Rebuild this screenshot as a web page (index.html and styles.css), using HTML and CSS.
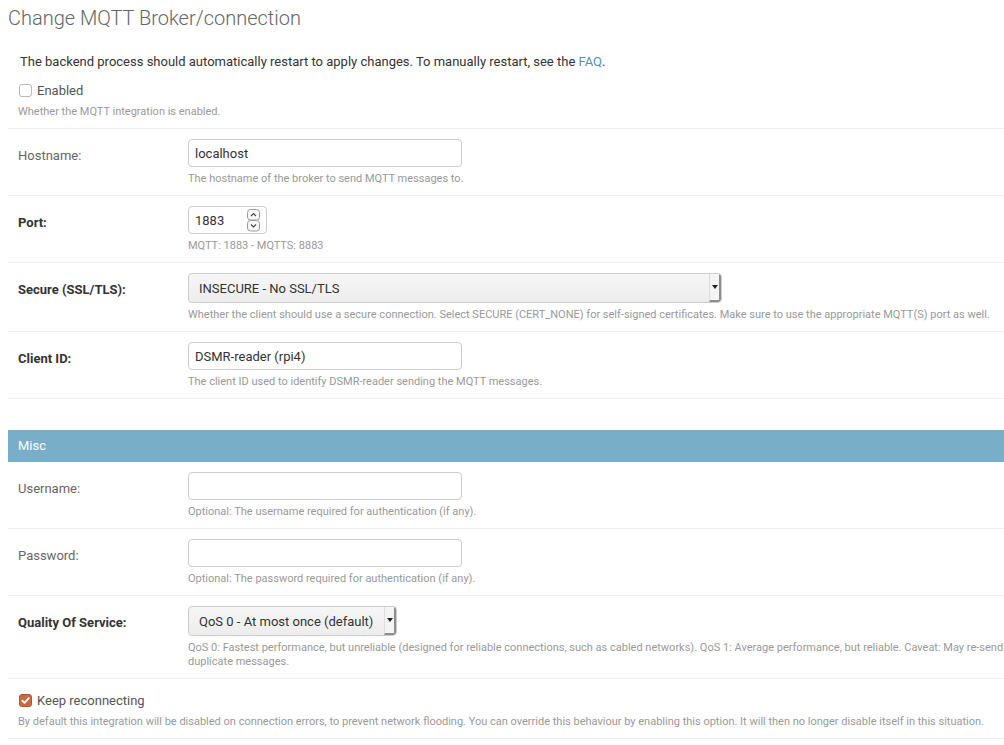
FILE: index.html
```html
<!DOCTYPE html>
<html lang="en">
<head>
<meta charset="utf-8">
<title>Change MQTT Broker/connection</title>
<link rel="stylesheet" href="styles.css">
</head>
<body>
<div class="page">
  <h1>Change MQTT Broker/connection</h1>
  <p class="notice">The backend process should automatically restart to apply changes. To manually restart, see the <a href="#">FAQ</a>.</p>
  <form>
    <fieldset class="module">
      <div class="row check-row">
        <div class="check-line"><span class="cb"></span><label class="cb-label">Enabled</label></div>
        <p class="help">Whether the MQTT integration is enabled.</p>
      </div>
      <div class="row field-row">
        <label class="label">Hostname:</label>
        <div class="field">
          <input class="text" type="text" value="localhost">
          <p class="help">The hostname of the broker to send MQTT messages to.</p>
        </div>
      </div>
      <div class="row field-row">
        <label class="label req">Port:</label>
        <div class="field">
          <div class="num">
            <input class="num-input" type="text" value="1883">
            <svg class="spin" width="13" height="23" viewBox="0 0 13 23">
              <rect x="0.5" y="0.5" width="12" height="10.5" rx="3" fill="#f7f7f7" stroke="#9a9a9a"/>
              <rect x="0.5" y="11.5" width="12" height="10.5" rx="3" fill="#f7f7f7" stroke="#9a9a9a"/>
              <path d="M4 7 L6.5 4.5 L9 7" fill="none" stroke="#444" stroke-width="1.1"/>
              <path d="M4 15.5 L6.5 18 L9 15.5" fill="none" stroke="#444" stroke-width="1.1"/>
            </svg>
          </div>
          <p class="help">MQTT: 1883 - MQTTS: 8883</p>
        </div>
      </div>
      <div class="row field-row">
        <label class="label req">Secure (SSL/TLS):</label>
        <div class="field">
          <div class="select wide">
            <select><option>INSECURE - No SSL/TLS</option></select>
            <span class="arrow"></span>
          </div>
          <p class="help">Whether the client should use a secure connection. Select SECURE (CERT_NONE) for self-signed certificates. Make sure to use the appropriate MQTT(S) port as well.</p>
        </div>
      </div>
      <div class="row field-row">
        <label class="label req">Client ID:</label>
        <div class="field">
          <input class="text" type="text" value="DSMR-reader (rpi4)">
          <p class="help">The client ID used to identify DSMR-reader sending the MQTT messages.</p>
        </div>
      </div>
    </fieldset>

    <fieldset class="module misc">
      <h2>Misc</h2>
      <div class="row field-row">
        <label class="label">Username:</label>
        <div class="field">
          <input class="text" type="text" value="">
          <p class="help">Optional: The username required for authentication (if any).</p>
        </div>
      </div>
      <div class="row field-row">
        <label class="label">Password:</label>
        <div class="field">
          <input class="text" type="password" value="">
          <p class="help">Optional: The password required for authentication (if any).</p>
        </div>
      </div>
      <div class="row field-row">
        <label class="label req">Quality Of Service:</label>
        <div class="field">
          <div class="select qos">
            <select><option>QoS 0 - At most once (default)</option></select>
            <span class="arrow"></span>
          </div>
          <p class="help">QoS 0: Fastest performance, but unreliable (designed for reliable connections, such as cabled networks). QoS 1: Average performance, but reliable. Caveat: May re-send duplicate messages.</p>
        </div>
      </div>
      <div class="row check-row">
        <div class="check-line">
          <span class="cb on"><svg width="11" height="11" viewBox="0 0 11 11"><path d="M2.3 5.6 L4.5 7.8 L8.8 3.2" fill="none" stroke="#fff" stroke-width="1.8" stroke-linecap="round" stroke-linejoin="round"/></svg></span>
          <label class="cb-label">Keep reconnecting</label>
        </div>
        <p class="help">By default this integration will be disabled on connection errors, to prevent network flooding. You can override this behaviour by enabling this option. It will then no longer disable itself in this situation.</p>
      </div>
    </fieldset>
  </form>
</div>
</body>
</html>
```
FILE: styles.css
```css
html {
  overflow: hidden;
}

body {
  margin: 0;
  font-family: Roboto, "Liberation Sans", Arial, sans-serif;
  font-size: 13px;
  color: #333;
  background: #fff;
}

.page {
  width: 1020px;
  padding: 6px 0 0 8px;
}

h1 {
  margin: 0;
  font-size: 20px;
  line-height: 24px;
  font-weight: 300;
  color: #666;
}

.notice {
  margin: 24px 0 0;
  padding-left: 12px;
  line-height: 15px;
  color: #333;
}

.notice a {
  color: #4f92c3;
  text-decoration: none;
}

fieldset {
  border: 0;
  margin: 0;
  padding: 0;
  min-width: 0;
}

.misc {
  margin-top: 31px;
}

.misc h2 {
  margin: 0;
  padding: 8px 10px;
  font-size: 13px;
  line-height: 16px;
  font-weight: 400;
  color: #fff;
  background: #79aec8;
}

.row {
  padding: 10px 10px 9px;
  border-bottom: 1px solid #eee;
}

.check-row {
  padding: 11px 10px 9px;
}

.check-row .help {
  margin-top: 4px;
}

.field-row {
  display: flex;
}

.label {
  flex: none;
  width: 160px;
  padding: 9px 10px 0 0;
  line-height: 16px;
  color: #666;
}

.label.req {
  font-weight: 700;
  color: #333;
}

.field {
  flex: 1;
  min-width: 0;
}

.help {
  margin: 5px 0 0;
  font-size: 11px;
  line-height: 14px;
  color: #999;
}

.text {
  display: block;
  box-sizing: border-box;
  width: 274px;
  height: 28px;
  margin: 0;
  padding: 0 6px;
  border: 1px solid #ccc;
  border-radius: 4px;
  font-family: inherit;
  font-size: 13px;
  color: #333;
  background: #fff;
  outline: none;
}

.num {
  display: flex;
  align-items: center;
  box-sizing: border-box;
  width: 79px;
  height: 28px;
  padding: 0 6px 0 6px;
  border: 1px solid #ccc;
  border-radius: 4px;
  background: #fff;
}

.num-input {
  flex: 1;
  min-width: 0;
  border: 0;
  padding: 0;
  margin: 0;
  font-family: inherit;
  font-size: 13px;
  color: #333;
  background: transparent;
  outline: none;
}

.spin {
  flex: none;
  display: block;
}

.select {
  display: flex;
  box-sizing: border-box;
  height: 30px;
  border: 1px solid #ccc;
  border-radius: 4px;
  background: linear-gradient(#f6f6f6, #ededed);
  overflow: hidden;
}

.select.wide {
  width: 534px;
}

.select.qos {
  width: 209px;
}

.select select {
  flex: 1;
  min-width: 0;
  -webkit-appearance: none;
  appearance: none;
  border: 0;
  margin: 0;
  padding: 0 10px;
  font-family: inherit;
  font-size: 13px;
  color: #333;
  background: transparent;
  outline: none;
}

.arrow {
  flex: none;
  width: 9px;
  border-left: 1px solid #ddd;
  border-right: 2px solid #8e8e8e;
  border-bottom: 2px solid #8e8e8e;
  border-bottom-right-radius: 3px;
  background: #f4f4f4;
  display: flex;
  align-items: center;
  justify-content: center;
}

.arrow::after {
  content: "";
  width: 0;
  height: 0;
  border-left: 3px solid transparent;
  border-right: 3px solid transparent;
  border-top: 4px solid #222;
}

.check-line {
  display: flex;
  align-items: center;
  gap: 5px;
  height: 21px;
}

.cb {
  flex: none;
  box-sizing: border-box;
  width: 13px;
  height: 13px;
  margin-left: 1px;
  border: 1px solid #b8b8b8;
  border-radius: 3px;
  background: #fff;
  display: flex;
  align-items: center;
  justify-content: center;
}

.cb.on {
  background: #cc683d;
  border-color: #b0552e;
}

.cb svg {
  display: block;
}

.cb-label {
  color: #555;
  line-height: 16px;
}
```
